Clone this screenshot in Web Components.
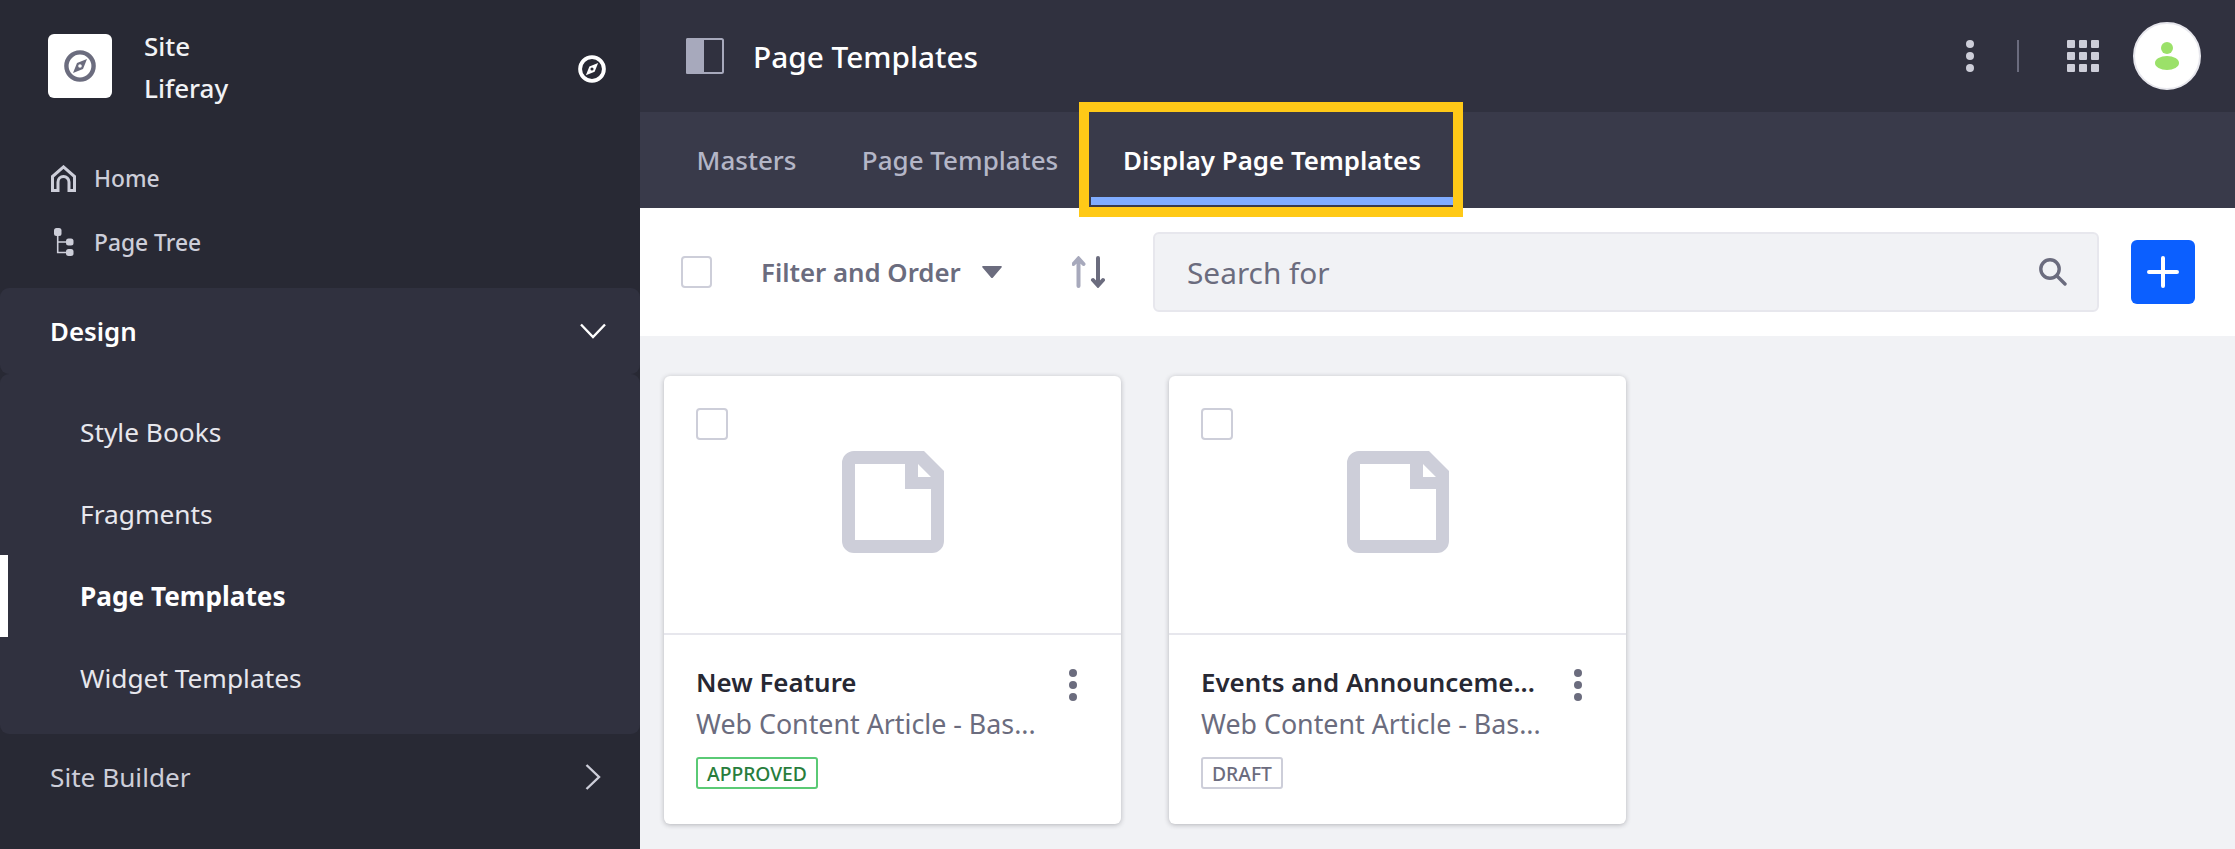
<!DOCTYPE html>
<html lang="en"><head><meta charset="utf-8"><title>Page Templates</title>
<style>
html,body{margin:0;padding:0;height:849px;overflow:hidden;background:#f1f2f5}
body{font-family:"Noto Sans","Open Sans",sans-serif}
</style></head><body>
<lr-app>
  <lr-sidebar slot="side">
    <lr-nav-link icon="home">Home</lr-nav-link>
    <lr-nav-link icon="tree">Page Tree</lr-nav-link>
    <lr-section title="Design" open>
      <lr-menu-item>Style Books</lr-menu-item>
      <lr-menu-item>Fragments</lr-menu-item>
      <lr-menu-item active>Page Templates</lr-menu-item>
      <lr-menu-item>Widget Templates</lr-menu-item>
    </lr-section>
    <lr-section title="Site Builder"></lr-section>
  </lr-sidebar>
  <lr-header></lr-header>
  <lr-tabs></lr-tabs>
  <lr-toolbar></lr-toolbar>
  <lr-cards>
    <lr-card title="New Feature" label="APPROVED" kind="ok"></lr-card>
    <lr-card title="Events and Announceme..." label="DRAFT" kind="draft"></lr-card>
  </lr-cards>
</lr-app>
<script>
const compass=(c)=>`<svg viewBox="0 0 32 32" width="100%" height="100%" style="display:block"><circle cx="16" cy="16" r="13.6" fill="none" stroke="${c}" stroke-width="4.4"/><path fill-rule="evenodd" fill="${c}" d="M23 9l-4 10-10 4 4-10zM16 14.2a1.8 1.8 0 1 0 0 3.6a1.8 1.8 0 0 0 0-3.6z"/></svg>`;
const ICONS={
 home:`<svg width="25" height="27" viewBox="0 0 25 27" style="display:block"><path fill="none" stroke="#cdced9" stroke-width="3" d="M1.500 25.500V11.500L12.500 1.900 23.500 11.500V25.500H18V17a5.500 5.500 0 0 0-11 0V25.500Z"/></svg>`,
 tree:`<svg width="20" height="28" viewBox="0 0 20 28" style="display:block"><g fill="#cdced9"><rect x="0" y="0" width="7.500" height="8" rx="2.500"/><rect x="12" y="10.500" width="7.500" height="7" rx="2.500"/><rect x="12" y="21" width="7.500" height="7" rx="2.500"/></g><path fill="none" stroke="#cdced9" stroke-width="1.600" d="M3.700 8V24.500H12M3.700 14H12"/></svg>`
};
function def(name,css,html){
  customElements.define(name,class extends HTMLElement{
    constructor(){super();this.attachShadow({mode:"open"});}
    connectedCallback(){
      if(this._r)return;this._r=1;
      const h=typeof html==="function"?html(this):html;
      this.shadowRoot.innerHTML=`<style>${css}</style>${h}`;
    }
  });
}
def("lr-app",`:host{display:grid;grid-template-columns:640px 1fr;grid-template-rows:112px 96px 128px 513px;width:2235px;height:849px;overflow:hidden}
 .side{grid-row:1/5;grid-column:1}`,
 `<div class="side"><slot name="side"></slot></div><slot></slot>`);
def("lr-sidebar",`:host{display:block;height:849px;background:#282934;color:#cdced9}
 .top{display:flex;align-items:flex-start;padding:25px 34px 0 48px;height:146px;box-sizing:border-box}
 .logo{width:64px;height:64px;background:#fff;border-radius:6px;margin-top:9px;display:flex;align-items:center;justify-content:center;flex:none}
 .logo i{display:block;width:32px;height:32px}
 .name{margin-left:32px;font-size:26px;line-height:42px;font-weight:500;color:#f1f2f5;flex:1}
 .sw{width:28px;height:28px;margin-top:30px;flex:none}`,
 `<div class="top"><div class="logo"><i>${compass("#6b6c7e")}</i></div><div class="name">Site<br>Liferay</div><div class="sw">${compass("#fff")}</div></div><slot></slot>`);
def("lr-nav-link",`:host{display:flex;align-items:center;height:64px;padding-left:51px;box-sizing:border-box;font-size:22.800px;font-weight:500;color:#cdced9}
 .ic{width:43px;flex:none;display:flex}
 .ic.t{padding-left:3px;width:40px}`,
 el=>`<span class="ic ${el.getAttribute("icon")==="tree"?"t":""}">${ICONS[el.getAttribute("icon")]}</span><slot></slot>`);
def("lr-section",`:host{display:block;font-size:26.200px}
 :host([open]){margin-top:14px}
 .hd{display:flex;align-items:center;justify-content:space-between;height:86px;padding:0 34px 0 50px;box-sizing:border-box;border-radius:9px;color:#cdced9}
 :host([open]) .hd{background:#30313f;color:#fff;font-weight:600;font-size:25.800px}
 .panel{background:#30313f;border-radius:9px;padding:17px 0 15px}
 svg{display:block}`,
 el=>{const o=el.hasAttribute("open");return `<div class="hd"><span>${el.getAttribute("title")}</span>${o?
  `<svg width="26" height="16" viewBox="0 0 26 16"><path fill="none" stroke="#fff" stroke-width="2.400" d="M1 1.500L13 14 25 1.500"/></svg>`:
  `<svg width="16" height="26" viewBox="0 0 16 26" style="margin-right:5px"><path fill="none" stroke="#cdced9" stroke-width="2.400" d="M1.500 1L14 13 1.500 25"/></svg>`}</div>${o?`<div class="panel"><slot></slot></div>`:""}`});
def("lr-menu-item",`:host{display:flex;align-items:center;height:82px;padding-left:80px;box-sizing:border-box;font-size:26.300px;color:#e7e7ed;position:relative}
 :host([active]){color:#fff;font-weight:700;font-size:26.200px}
 :host([active])::before{content:"";position:absolute;left:0;top:0;bottom:0;width:8px;background:#fff}`,`<slot></slot>`);
def("lr-header",`:host{display:flex;align-items:center;background:#30313f;padding:0 34px 0 46px;box-sizing:border-box;color:#fff}
 h1{margin:0 0 0 29px;font-size:29.800px;font-weight:500;flex:1}
 .dots{display:grid;gap:4px;margin-right:43px}.dots i{width:8px;height:8px;border-radius:50%;background:#cdced9;display:block}
 .sep{width:2px;height:32px;background:#6b6c7e;margin-right:48px}
 .grid{display:grid;grid-template-columns:repeat(3,8px);gap:4px;margin-right:34px}.grid i{width:8px;height:8px;background:#cdced9;border-radius:1px;display:block}
 .av{width:68px;height:68px;box-sizing:border-box;border-radius:50%;background:#fff;border:2px solid #e7e7ed;display:flex;align-items:center;justify-content:center}`,
 `<svg width="38" height="36" viewBox="0 0 38 36" style="display:block"><rect x="0" y="0" width="18" height="36" rx="1.500" fill="#a7a9bc"/><rect x="1" y="1" width="36" height="34" rx="1.500" fill="none" stroke="#a7a9bc" stroke-width="2"/></svg>
 <h1>Page Templates</h1>
 <div class="dots"><i></i><i></i><i></i></div><div class="sep"></div>
 <div class="grid"><i></i><i></i><i></i><i></i><i></i><i></i><i></i><i></i><i></i></div>
 <div class="av"><svg width="26" height="28" viewBox="0 0 26 28" style="display:block"><circle cx="13" cy="6" r="6" fill="#9be169"/><ellipse cx="13" cy="21" rx="12" ry="7" fill="#9be169"/></svg></div>`);
def("lr-tabs",`:host{display:flex;background:#393a4a;padding-left:24px;position:relative;font-size:26px;color:#b4b6c7;font-weight:500}
 a{display:flex;align-items:center;justify-content:center;box-sizing:border-box;height:96px}
 .on{color:#fff;font-weight:600;position:relative;font-size:25.900px}
 .on::after{content:"";position:absolute;left:0;right:0;top:85px;height:8px;background:#80acff}
 .hl{position:absolute;left:439px;top:-10px;width:384px;height:115px;box-sizing:border-box;border:10px solid #ffc917;pointer-events:none}`,
 `<a style="width:165px">Masters</a><a style="width:262px">Page Templates</a><a class="on" style="width:362px">Display Page Templates</a><div class="hl"></div>`);
def("lr-toolbar",`:host{display:flex;align-items:center;background:#fff;padding:0 40px 0 41px;box-sizing:border-box;font-size:24px}
 .cb{width:31px;height:32px;box-sizing:border-box;border:2px solid #cdced9;border-radius:4px;flex:none}
 .f{margin-left:49px;width:200px;color:#6b6c7e;font-weight:600;white-space:nowrap;font-size:25.800px}
 .s{display:flex;align-items:center;height:80px;width:946px;box-sizing:border-box;margin-left:48px;background:#f1f2f5;border:2px solid #e7e7ed;border-radius:6px;padding:0 30px 0 32px;color:#6b6c7e;font-size:29.800px;justify-content:space-between}
 .b{width:64px;height:64px;background:#0b5fff;border-radius:6px;margin-left:32px;display:flex;align-items:center;justify-content:center;flex:none}
 svg{display:block;flex:none}`,
 `<div class="cb"></div><div class="f">Filter and Order</div>
 <svg width="20" height="12" viewBox="0 0 20 12" style="margin-left:21px"><path fill="#6b6c7e" d="M1 0h18c1 0 1 1 .5 1.600L11 11.400c-.6.7-1.400.7-2 0L.5 1.600C0 1 0 0 1 0z"/></svg>
 <svg width="33" height="32" viewBox="0 0 33 32" style="margin-left:70px"><path fill="none" stroke="#a7a9bc" stroke-width="4" stroke-linecap="round" d="M6.500 30V3M1.500 8L6.500 2.500 11.500 8"/><path fill="none" stroke="#6b6c7e" stroke-width="4" stroke-linecap="round" d="M26 2V29M21 24L26 29.500 31 24"/></svg>
 <div class="s"><span>Search for</span><svg width="28" height="28" viewBox="0 0 28 28"><circle cx="11" cy="11" r="9.200" fill="none" stroke="#6b6c7e" stroke-width="3.400"/><path stroke="#6b6c7e" stroke-width="3.400" stroke-linecap="round" fill="none" d="M18 18l8 8"/></svg></div>
 <div class="b"><svg width="32" height="32" viewBox="0 0 32 32"><path fill="none" stroke="#fff" stroke-width="4" stroke-linecap="round" d="M16 2V30M2 16H30"/></svg></div>`);
def("lr-cards",`:host{display:flex;gap:48px;padding:40px 24px 0;box-sizing:border-box}`,`<slot></slot>`);
def("lr-card",`:host{display:block;width:457px;height:448px;background:#fff;border-radius:6px;box-shadow:0 1px 5px rgba(39,40,51,.3);flex:none;color:#6b6c7e;font-size:26.800px}
 .top{height:257px;border-bottom:2px solid #e7e7ed;position:relative;display:flex;align-items:flex-start;justify-content:center}
 .cb{position:absolute;left:32px;top:32px;width:32px;height:32px;box-sizing:border-box;border:2px solid #cdced9;border-radius:4px}
 .file{margin-top:75px;display:block}
 .bot{display:flex;padding:29px 0 0 32px}
 .txt{flex:1;min-width:0}
 .t{font-weight:600;color:#272833;line-height:36px;white-space:nowrap;font-size:25.900px}
 .d{line-height:36px;margin-top:6px;white-space:nowrap}
 .l{display:inline-flex;align-items:center;height:32px;box-sizing:border-box;border:2px solid;border-radius:3px;font-size:19.300px;padding:0 9px;margin-top:15px;font-weight:500}
 .ok{border-color:#5aca75;color:#287d3c}.draft{border-color:#cdced9;color:#6b6c7e}
 .dots{display:grid;gap:4px;width:8px;margin:5px 44px 0 0;flex:none;align-self:flex-start}.dots i{display:block;width:8px;height:8px;border-radius:50%;background:#6b6c7e}`,
 el=>`<div class="top"><div class="cb"></div><svg class="file" width="102" height="102" viewBox="0 0 102 102"><path fill="#cdced9" fill-rule="evenodd" d="M12 0H82L102 20V90A12 12 0 0 1 90 102H12A12 12 0 0 1 0 90V12A12 12 0 0 1 12 0ZM13 13V89H89V38H63V13ZM76 13V26H89Z"/></svg></div>
 <div class="bot"><div class="txt"><div class="t">${el.getAttribute("title")}</div><div class="d">Web Content Article - Bas...</div><span class="l ${el.getAttribute("kind")}">${el.getAttribute("label")}</span></div><div class="dots"><i></i><i></i><i></i></div></div>`);
</script>
</body></html>
